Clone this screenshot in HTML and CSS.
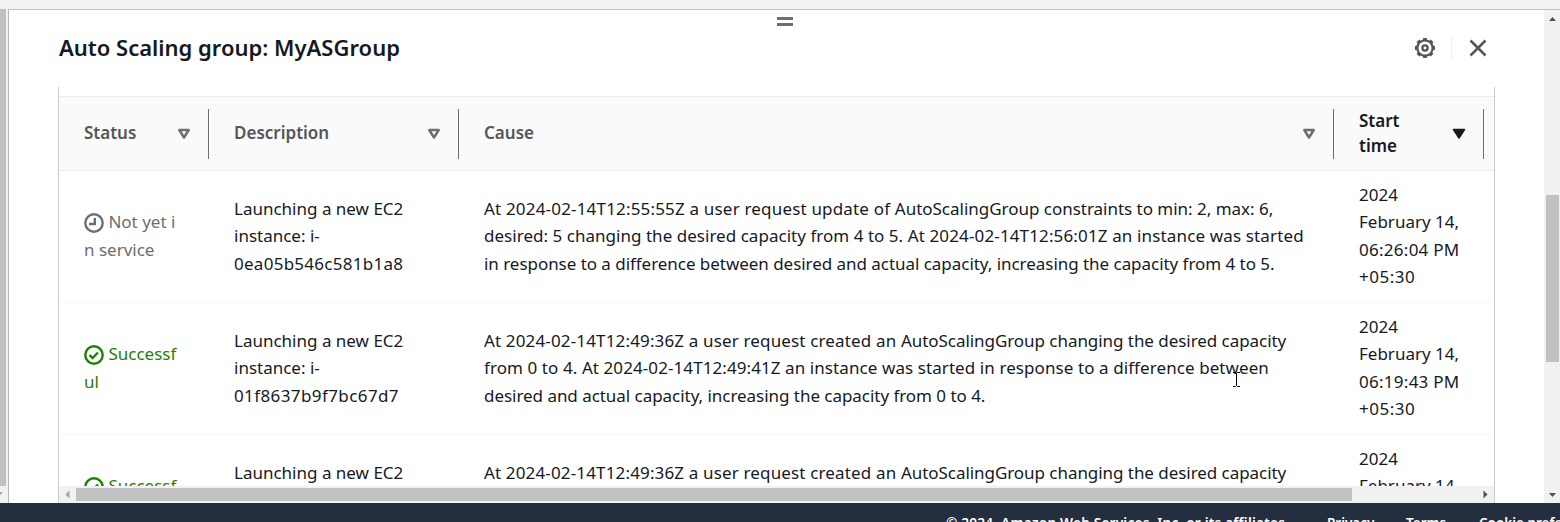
FILE: index.html
```html
<!DOCTYPE html>
<html lang="en">
<head>
<meta charset="utf-8">
<title>Auto Scaling group: MyASGroup</title>
<link rel="stylesheet" href="styles.css">
</head>
<body>
<div class="page-edge"></div>
<div class="middle">
  <div class="left-scroll"><div class="left-thumb"></div><svg width="6" height="16" viewBox="0 0 6 16"><path d="M-2 6H3L0 9z" fill="#a3a3a3"/></svg></div>
  <main class="panel">
    <div class="panel-main">
      <div class="grip"><i></i><i></i></div>
      <header class="panel-head">
        <h2>Auto Scaling group: MyASGroup</h2>
        <div class="actions">
          <svg width="22" height="22" viewBox="0 0 22 22" fill="none" stroke="#545659"><circle cx="11" cy="11" r="7.700" stroke-width="2.300"/><circle cx="11" cy="11" r="9" stroke-width="2.200" pathLength="80" stroke-dasharray="5.500 4.500" stroke-dashoffset="2.750"/><circle cx="11" cy="11" r="2.600" stroke-width="2.300"/></svg>
          <span class="sep"></span>
          <svg width="18" height="18" viewBox="0 0 18 18" fill="none" stroke="#545659" stroke-width="2.500"><path d="M1.500 1.500l15 15M16.500 1.500l-15 15"/></svg>
        </div>
      </header>
      <section class="table-box">
        <div class="table-view">
          <div class="row head">
            <div class="th"><span>Status</span><svg width="14" height="12" viewBox="0 0 14 12"><path d="M2.300 2h9.400L7 9.500z" fill="none" stroke="#6c6e70" stroke-width="2.500" stroke-linejoin="round"/></svg></div>
            <div class="th"><span>Description</span><svg width="14" height="12" viewBox="0 0 14 12"><path d="M2.300 2h9.400L7 9.500z" fill="none" stroke="#6c6e70" stroke-width="2.500" stroke-linejoin="round"/></svg></div>
            <div class="th"><span>Cause</span><svg width="14" height="12" viewBox="0 0 14 12"><path d="M2.300 2h9.400L7 9.500z" fill="none" stroke="#6c6e70" stroke-width="2.500" stroke-linejoin="round"/></svg></div>
            <div class="th sorted"><span>Start<br>time</span><svg width="14" height="12" viewBox="0 0 14 12"><path d="M1.500 1.500h11L7 10z" fill="#16191f" stroke="#16191f" stroke-width="1.500" stroke-linejoin="round"/></svg></div>
          </div>
          <div class="row">
            <div class="td pending"><p><svg width="20" height="20" viewBox="0 0 20 20" fill="none" stroke="currentColor" stroke-width="2.400"><circle cx="10" cy="10" r="8.700"/><path d="M10.800 5v6H5"/></svg> Not yet i<br>n service</p></div>
            <div class="td desc"><p>Launching a new EC2<br>instance: i-<br><span class="id-a">0ea05b546c581b1a8</span></p></div>
            <div class="td cause"><p><span class="loose">At 2024-02-14T12:55:55Z a user request update of </span><span class="rest">AutoScalingGroup constraints to min: 2, max: 6,</span><br><span class="even">desired: 5 changing the desired capacity from 4 to 5. </span><span class="mid">At 2024-02-14T12:56:01Z an instance was started</span><br><span class="snug">in response to a difference between desired and actual capacity, increasing the capacity from 4 to 5.</span></p></div>
            <div class="td time"><p>2024<br>February 14,<br><span class="clock">06:26:04 PM</span><br><span class="zone">+05:30</span></p></div>
          </div>
          <div class="row">
            <div class="td success"><p><svg width="20" height="20" viewBox="0 0 20 20" fill="none" stroke="currentColor" stroke-width="2.400"><circle cx="10" cy="10" r="8.700"/><path d="M5.500 10l3 3 5.500-5.500"/></svg> Successf<br>ul</p></div>
            <div class="td desc"><p>Launching a new EC2<br>instance: i-<br><span class="id-b">01f8637b9f7bc67d7</span></p></div>
            <div class="td cause"><p><span class="loose-b">At 2024-02-14T12:49:36Z a user request created an </span><span class="rest-b">AutoScalingGroup changing the desired capacity</span><br>from 0 to 4. At 2024-02-14T12:49:41Z an instance was started in response to a difference between<br><span class="snug">desired and actual capacity, increasing the capacity from 0 to 4.</span></p></div>
            <div class="td time"><p>2024<br>February 14,<br><span class="clock">06:19:43 PM</span><br><span class="zone">+05:30</span></p></div>
          </div>
          <div class="row">
            <div class="td success"><p><svg width="20" height="20" viewBox="0 0 20 20" fill="none" stroke="currentColor" stroke-width="2.400"><circle cx="10" cy="10" r="8.700"/><path d="M5.500 10l3 3 5.500-5.500"/></svg> Successf<br>&nbsp;</p></div>
            <div class="td desc"><p>Launching a new EC2<br>&nbsp;<br>&nbsp;</p></div>
            <div class="td cause"><p><span class="loose-b">At 2024-02-14T12:49:36Z a user request created an </span><span class="rest-b">AutoScalingGroup changing the desired capacity</span><br>&nbsp;<br>&nbsp;</p></div>
            <div class="td time"><p>2024<br>February 14,<br>&nbsp;<br>&nbsp;</p></div>
          </div>
        </div>
        <div class="hscroll">
          <svg width="17" height="17" viewBox="0 0 17 17"><path d="M10.500 4.500v8L6.500 8.500z" fill="#a3a3a3"/></svg>
          <div class="hthumb"></div>
          <svg width="17" height="17" viewBox="0 0 17 17"><path d="M6.500 4.500v8l4-4z" fill="#505050"/></svg>
        </div>
      </section>
    </div>
    <div class="vscroll">
      <svg width="16" height="17" viewBox="0 0 16 17"><path d="M5 11h7L8.500 7z" fill="#505050"/></svg>
      <div class="vthumb"></div>
      <svg width="16" height="17" viewBox="0 0 16 17"><path d="M5 7h7l-3.500 4z" fill="#505050"/></svg>
    </div>
  </main>
</div>
<footer class="footer"><span class="f-copy">© 2024, Amazon Web Services, Inc. or its affiliates.</span><span class="f-priv">Privacy</span><span class="f-terms">Terms</span><span>Cookie preferences</span></footer>
<svg class="cursor" width="9" height="17" viewBox="0 0 9 17"><path d="M1 1.500h2.500l1 1 1-1H8M4.500 2.500v12M1 15.500h2.500l1-1 1 1H8" fill="none" stroke="#000"/></svg>
</body>
</html>
```

FILE: styles.css
```css
* { box-sizing: border-box; }
body {
  margin: 0;
  width: 1560px;
  height: 522px;
  overflow: hidden;
  display: flex;
  flex-direction: column;
  position: relative;
  background: #fff;
  color: #16191f;
  font-family: "Noto Sans", "Open Sans", sans-serif;
  font-size: 17px;
  line-height: 27.5px;
}
svg { display: block; flex: none; }
p, h2 { margin: 0; }
.page-edge { height: 9px; flex: none; background: #f2f2f2; }
.middle { height: 494px; flex: none; display: flex; }
.left-scroll { width: 8px; background: #f1f1f1; display: flex; flex-direction: column; }
.left-thumb { width: 6px; height: 477px; background: #c1c1c1; }
.panel {
  flex: 1;
  min-width: 0;
  display: flex;
  justify-content: space-between;
  border-left: 1px solid #b8b8b8;
  border-top: 1px solid #c2c2c2;
}
.panel-main { width: 1486px; padding-left: 49px; display: flex; flex-direction: column; }
.grip {
  height: 23px;
  padding: 7px 0 0 719px;
  display: flex;
  flex-direction: column;
  gap: 3px;
}
.grip i { width: 16px; height: 3px; background: #6c6e70; }
.panel-head {
  height: 54px;
  padding: 0 8px 24px 1px;
  display: flex;
  align-items: center;
  justify-content: space-between;
}
h2 { font-size: 22px; line-height: 30px; font-weight: 600; padding-bottom: 2px; }
.actions { display: flex; align-items: center; padding-bottom: 1px; }
.sep { width: 1px; height: 23px; margin: 0 17px 0 15px; background: #edf0f1; }
.table-box {
  height: 416px;
  border: solid #c9cccf;
  border-width: 0 1px;
  display: flex;
  flex-direction: column;
}
.table-view { height: 399px; padding-top: 9px; overflow: hidden; background: #fff; }
.row {
  display: grid;
  grid-template-columns: 150px 250px 875px 150px;
  height: 132px;
  border-bottom: 1px solid #f7f8f8;
}
.row.head { height: 75px; background: #fafafa; border: solid #eaeded; border-width: 1px 0; }
.th {
  height: 50px;
  margin-top: 12px;
  padding: 0 17px 0 25px;
  display: flex;
  align-items: center;
  justify-content: space-between;
  border-right: 1px solid #6c6e70;
  color: #545659;
  font-weight: 600;
  line-height: 25px;
}
.th span { padding-bottom: 3px; }
.th svg { margin-bottom: 1px; }
.th.sorted { color: #16191f; }
.td { padding: 0 0 1px 25px; display: flex; align-items: center; white-space: nowrap; }
.td svg { display: inline-block; vertical-align: -5px; }
.pending, .success, .time { padding-bottom: 2px; }
.pending { color: #6c6e70; }
.success { color: #1d8102; }
.cause { letter-spacing: 0.083px; }
.loose { letter-spacing: 0.18px; }
.rest { letter-spacing: -0.02px; }
.loose-b { letter-spacing: 0.15px; }
.rest-b { letter-spacing: -0.05px; }
.even { letter-spacing: 0.03px; }
.mid { letter-spacing: 0.14px; }
.snug { letter-spacing: -0.04px; }
.id-a, .clock { letter-spacing: 0.27px; }
.id-b { letter-spacing: 0.4px; }
.zone { letter-spacing: 0.5px; }
.hscroll { height: 17px; background: #f1f1f1; display: flex; align-items: center; }
.hthumb { width: 1276px; height: 13px; background: #c1c1c1; margin-right: 125px; }
.vscroll { width: 16px; background: #f1f1f1; display: flex; flex-direction: column; }
.vthumb { width: 13px; height: 167px; margin: 168px 0 124px 2px; background: #c1c1c1; }
.footer {
  flex: 1;
  padding: 10px 0 0 946px;
  display: flex;
  background: #232f3e;
  color: #fff;
  font-size: 13.5px;
  font-weight: 600;
  line-height: 20px;
  white-space: nowrap;
}
.footer span { flex: none; }
.footer .f-copy { width: 381px; font-size: 13.7px; letter-spacing: 0.18px; }
.f-priv { width: 79px; }
.f-terms { width: 73px; }
.cursor { position: absolute; left: 1232px; top: 371px; }
```
